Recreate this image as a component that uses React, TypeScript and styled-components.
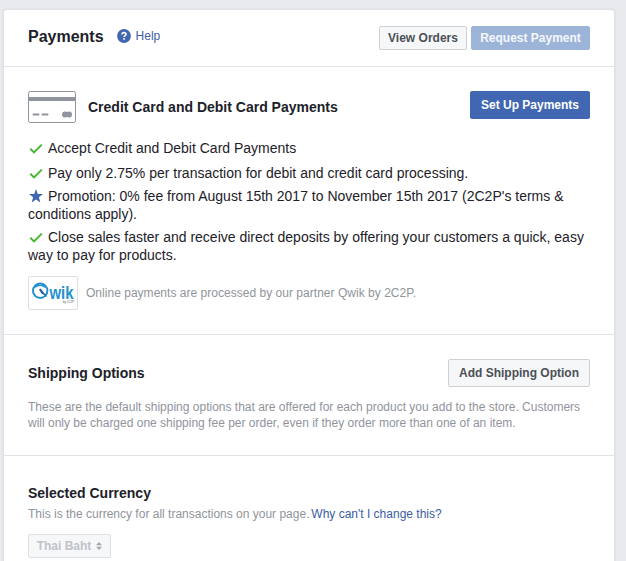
import React from 'react';
import styled, { createGlobalStyle, css } from 'styled-components';

const GlobalStyle = createGlobalStyle`
  * { box-sizing: border-box; }
  html, body { margin: 0; height: 100%; overflow: hidden; background: #e9eaee; }
  body { font-family: "Liberation Sans", Arial, sans-serif; color: #1d2129; }
`;

const Page = styled.div`
  height: 561px;
  padding: 10px 12px 0 4px;
  overflow: hidden;
`;

const Card = styled.main`
  width: 610px;
  height: 600px;
  background: #fff;
  border-radius: 3px;
  box-shadow: 0 0 0 1px #e0e1e5, 0 0 0 2px #e3e4e8;
`;

const Header = styled.header`
  display: flex;
  align-items: center;
  height: 57px;
  padding: 0 24px;
  border-bottom: 1px solid #e1e2e5;
`;

const Title = styled.h1`
  margin: 0 13px 2px 0;
  font-size: 16px;
  line-height: 20px;
`;

const HelpLink = styled.a`
  display: flex;
  align-items: center;
  gap: 5px;
  margin-bottom: 4px;
  font-size: 12px;
  line-height: 16px;
  color: #4061a6;
`;

const Actions = styled.div`
  display: flex;
  gap: 4px;
  margin-left: auto;
  margin-bottom: 1px;
`;

type Variant = 'default' | 'primary' | 'faded' | 'disabled';

const variants = {
  default: css`background: #f6f7f9; border-color: #ced0d4; color: #4b4f56;`,
  primary: css`background: #4267b2; border-color: #4267b2; color: #fff;`,
  faded: css`background: #9cb4d8; border-color: #9cb4d8; color: #f4f7fc;`,
  disabled: css`background: #f6f7f9; border-color: #dddfe2; color: #bec3c9;`,
};

const Button = styled.button<{ $variant: Variant; $width: number; $height: number }>`
  display: flex;
  align-items: center;
  justify-content: center;
  gap: 5px;
  width: ${(p) => p.$width}px;
  height: ${(p) => p.$height}px;
  padding: 0;
  border: 1px solid;
  border-radius: 2px;
  font: bold 12px/16px "Liberation Sans", Arial, sans-serif;
  white-space: nowrap;
  ${(p) => variants[p.$variant]}
`;

const Section = styled.section<{ $height: number; $top: number }>`
  height: ${(p) => p.$height}px;
  padding: ${(p) => p.$top}px 24px 0;
  border-bottom: 1px solid #e1e2e5;
`;

const SectionHead = styled.div<{ $align: 'flex-start' | 'center' }>`
  display: flex;
  align-items: ${(p) => p.$align};
  justify-content: space-between;
`;

const CardHeading = styled.div`
  display: flex;
  align-items: center;
  gap: 12px;
`;

const Heading = styled.h2`
  margin: 0;
  font-size: 14px;
  line-height: 18px;
`;

const Features = styled.ul`
  margin: 16px -4px 0 0;
  padding: 0;
  list-style: none;
`;

const Feature = styled.li`
  margin-bottom: 5px;
  font-size: 14px;
  line-height: 18px;
  &:first-child { margin-bottom: 7px; }
  svg { width: 16px; height: 16px; margin-right: 4px; vertical-align: -3px; }
`;

const Line = styled.span`
  display: block;
  white-space: nowrap;
`;

const Partner = styled.div`
  display: flex;
  align-items: center;
  gap: 8px;
  margin-top: 12px;
  font-size: 12px;
  letter-spacing: 0.025px;
  color: #90949c;
`;

const LogoFrame = styled.div`
  width: 50px;
  height: 34px;
  border: 1px solid #dddfe2;
  border-radius: 2px;
  svg { display: block; }
`;

const Note = styled.p<{ $top: number }>`
  margin: ${(p) => p.$top}px 0 0;
  font-size: 12px;
  line-height: 16px;
  color: #90949c;
`;

const NoteLink = styled.a`
  margin-left: -1.5px;
  color: #3a5da3;
`;

const CurrencyRow = styled.div`
  margin-top: 12px;
`;

const HelpIcon = () => (
  <svg width="14" height="14" viewBox="0 0 14 14">
    <circle cx="7" cy="7" r="6.9" fill="#4267b2" />
    <path d="M5 5.4C5 4.2 5.8 3.6 7 3.6s2 .7 2 1.7c0 1.3-1.9 1.4-1.9 2.7" fill="none" stroke="#fff" strokeWidth="1.6" />
    <rect x="6.2" y="9.1" width="1.7" height="1.6" fill="#fff" />
  </svg>
);

const CreditCardIcon = () => (
  <svg width="48" height="32" viewBox="0 0 48 32">
    <rect x=".5" y=".5" width="47" height="31" rx="2" fill="#fff" stroke="#90949c" />
    <rect x="0" y="6" width="48" height="4" fill="#90949c" />
    <path d="M5.5 23.5h5M14.5 23.5h5" stroke="#90949c" strokeWidth="2" strokeLinecap="round" />
    <circle cx="37" cy="23.5" r="3" fill="#90949c" />
    <circle cx="41" cy="23.5" r="3" fill="#90949c" />
  </svg>
);

const Check = () => (
  <svg viewBox="0 0 16 16">
    <path d="M2.3 8.8 6 12.4 13.8 4.6" fill="none" stroke="#42b72a" strokeWidth="1.9" />
  </svg>
);

const Star = () => (
  <svg viewBox="0 0 16 16">
    <path d="M8 1 9.8 5.9 15 6.1 10.9 9.3 12.3 14.4 8 11.4 3.7 14.4 5.1 9.3 1 6.1 6.2 5.9z" fill="#4267b2" />
  </svg>
);

const QwikLogo = () => (
  <svg width="48" height="32" viewBox="0 0 48 32">
    <circle cx="11.2" cy="13.8" r="7.2" fill="none" stroke="#2491cf" strokeWidth="2" />
    <path d="M6.2 10Q11 6.5 16.2 10" fill="none" stroke="#2491cf" strokeWidth="1.6" />
    <path d="M10 12.4 11.6 11.6 18.6 20.2 12.4 16.2z" fill="#235d9f" />
    <text x="20.5" y="22" textLength="24" lengthAdjust="spacingAndGlyphs" fontFamily="Liberation Sans, sans-serif" fontWeight="bold" fontSize="17.5" fill="#2491cf">wik</text>
    <text x="34" y="26.3" textLength="11" lengthAdjust="spacingAndGlyphs" fontFamily="Liberation Sans, sans-serif" fontSize="3.2" fill="#555">by 2C2P</text>
  </svg>
);

const SortIcon = () => (
  <svg width="6" height="8" viewBox="0 0 6 8">
    <path d="M0 3.3 3 0 6 3.3zM0 4.7h6L3 8z" fill="#a3a8b0" />
  </svg>
);

export default function App() {
  return (
    <Page>
      <GlobalStyle />
      <Card>
        <Header>
          <Title>Payments</Title>
          <HelpLink><HelpIcon />Help</HelpLink>
          <Actions>
            <Button $variant="default" $width={88} $height={24}>View Orders</Button>
            <Button $variant="faded" $width={119} $height={24}>Request Payment</Button>
          </Actions>
        </Header>
        <Section $height={268} $top={24}>
          <SectionHead $align="flex-start">
            <CardHeading>
              <CreditCardIcon />
              <Heading>Credit Card and Debit Card Payments</Heading>
            </CardHeading>
            <Button $variant="primary" $width={120} $height={28}>Set Up Payments</Button>
          </SectionHead>
          <Features>
            <Feature><Check />Accept Credit and Debit Card Payments</Feature>
            <Feature><Check />Pay only 2.75% per transaction for debit and credit card processing.</Feature>
            <Feature>
              <Line><Star />Promotion: 0% fee from August 15th 2017 to November 15th 2017 (2C2P's terms &amp;</Line>
              <Line>conditions apply).</Line>
            </Feature>
            <Feature>
              <Line><Check />Close sales faster and receive direct deposits by offering your customers a quick, easy</Line>
              <Line>way to pay for products.</Line>
            </Feature>
          </Features>
          <Partner>
            <LogoFrame><QwikLogo /></LogoFrame>
            <span>Online payments are processed by our partner Qwik by 2C2P.</span>
          </Partner>
        </Section>
        <Section $height={121} $top={24}>
          <SectionHead $align="center">
            <Heading>Shipping Options</Heading>
            <Button $variant="default" $width={142} $height={28}>Add Shipping Option</Button>
          </SectionHead>
          <Note $top={12}>
            <Line>These are the default shipping options that are offered for each product you add to the store. Customers</Line>
            <Line>will only be charged one shipping fee per order, even if they order more than one of an item.</Line>
          </Note>
        </Section>
        <Section $height={140} $top={28}>
          <Heading>Selected Currency</Heading>
          <Note $top={4}>
            This is the currency for all transactions on your page. <NoteLink>Why can't I change this?</NoteLink>
          </Note>
          <CurrencyRow>
            <Button $variant="disabled" $width={83} $height={24}>Thai Baht<SortIcon /></Button>
          </CurrencyRow>
        </Section>
      </Card>
    </Page>
  );
}
